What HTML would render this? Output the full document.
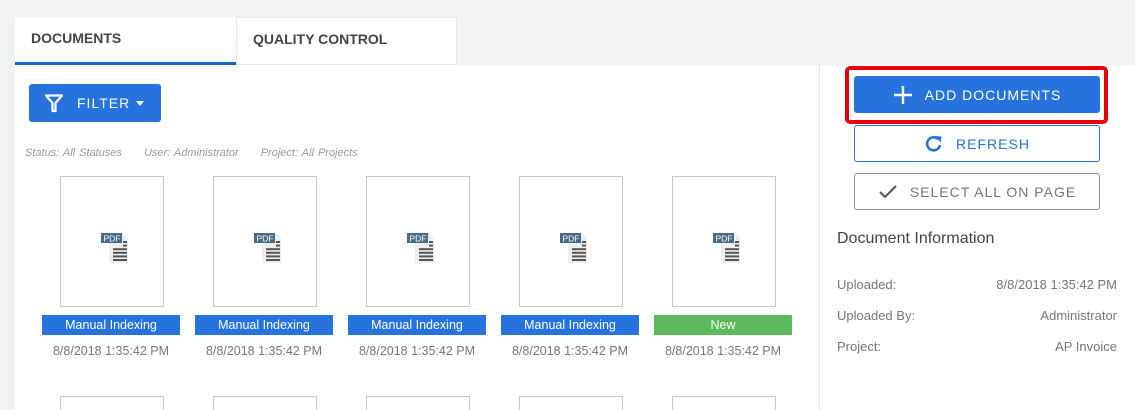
<!DOCTYPE html>
<html style="overflow:hidden;height:410px"><head><style>
body{margin:0;width:1135px;height:410px;background:#f1f2f2;font-family:"Liberation Sans",sans-serif;position:relative;overflow:hidden}
.a{position:absolute}
.tab{position:absolute;top:17px;height:48px;background:#fff;font-size:14px;font-weight:bold;color:#444;box-sizing:border-box;padding:13px 0 0 16px}
.thumb{position:absolute;top:176px;width:104px;height:131px;border:1px solid #c8c8cc;box-sizing:border-box;background:#fff}
.thumb2{top:396px;height:14px;border-bottom:none}
.lab{position:absolute;top:315px;width:138px;height:20px;background:#2673dd;color:#fff;font-size:12.5px;text-align:center;line-height:20px}
.dt{position:absolute;top:344px;width:138px;text-align:center;color:#777;font-size:12.5px}
.btn{position:absolute;left:854px;width:246px;height:37px;box-sizing:border-box;border-radius:3px;font-size:14px;letter-spacing:1px;display:flex;align-items:center;justify-content:center}
.row{position:absolute;left:837px;width:280px;font-size:13px;color:#777}
.row span{float:right}
</style></head><body>
<div class="a" style="left:15px;top:65px;width:1120px;height:345px;background:#fff"></div>
<div class="a" style="left:819px;top:65px;width:1px;height:345px;background:#e6e6e6"></div>
<div class="tab" style="left:15px;width:221px;border-bottom:3px solid #1565d0">DOCUMENTS</div>
<div class="tab" style="left:236px;width:221px;border:1px solid #e6e6e6">QUALITY CONTROL</div>
<div class="a" style="left:29px;top:84px;width:132px;height:38px;background:#2673dd;border-radius:3px;color:#fff;font-size:14px;letter-spacing:1px">
<svg class="a" style="left:16px;top:10px" width="18" height="19" viewBox="0 0 18 19"><path d="M1 1.5H17L10.5 9V17H7.5V9Z" fill="none" stroke="#fff" stroke-width="2.2" stroke-linejoin="round"/></svg>
<span class="a" style="left:48px;top:11px">FILTER</span>
<span class="a" style="left:107px;top:17px;border:4px solid transparent;border-top:5px solid #fff"></span></div>
<div class="a" style="left:25px;top:147px;font-size:11px;font-style:italic;color:#999;word-spacing:1px">Status: All Statuses<span style="margin-left:22px">User: Administrator</span><span style="margin-left:22px">Project: All Projects</span></div>
<div id="g"></div>
<script>
var xs=[60,213,366,519,672],h='';
xs.forEach(function(x,i){
h+='<div class="thumb" style="left:'+x+'px"><svg class="a" style="left:40px;top:55px" width="32" height="32" viewBox="0 0 32 32"><path d="M8 1H22L27 6V31H8Z" fill="#eee"/><rect x="0" y="1" width="21" height="10" fill="#4a6a86"/><text x="2.5" y="9.5" font-size="8.5" fill="#fff" font-family="Liberation Sans">PDF</text>';
for(var k=0;k<6;k++)h+='<rect x="'+(k<2?22:12)+'" y="'+(9+k*3.6)+'" width="'+(k<2?4:14)+'" height="2" fill="#555"/>';
h+='</svg></div><div class="thumb thumb2" style="left:'+x+'px"></div>';
var c=x-18;
h+='<div class="lab" style="left:'+c+'px;'+(i==4?'background:#5cb85c':'')+'">'+(i==4?'New':'Manual Indexing')+'</div>';
h+='<div class="dt" style="left:'+c+'px">8/8/2018 1:35:42 PM</div>';
});
document.getElementById('g').innerHTML=h;
</script>
<div class="a" style="left:845px;top:66px;width:263px;height:58px;box-sizing:border-box;border:4px solid #e8000b;border-radius:5px"></div>
<div class="btn" style="top:76px;background:#2673dd;color:#fff"><svg width="20" height="20" style="margin-right:12px"><path d="M10 1V19M1 10H19" stroke="#fff" stroke-width="2.4"/></svg>ADD DOCUMENTS</div>
<div class="btn" style="top:125px;border:1px solid #2673dd;color:#2673dd"><svg width="20" height="20" style="margin-right:12px" viewBox="0 0 20 20"><path d="M16 11A6.5 6.5 0 1 1 14 5" fill="none" stroke="#2673dd" stroke-width="2.6"/><path d="M11 2L17.5 2.5L16.5 8.5Z" fill="#2673dd"/></svg>REFRESH</div>
<div class="btn" style="top:173px;border:1px solid #8a93a0;color:#777"><svg width="20" height="16" style="margin-right:12px"><path d="M2 8L7 13L18 2" fill="none" stroke="#555" stroke-width="2"/></svg>SELECT ALL ON PAGE</div>
<div class="a" style="left:837px;top:230px;font-size:16px;color:#444">Document Information</div>
<div class="row" style="top:277px">Uploaded:<span>8/8/2018 1:35:42 PM</span></div>
<div class="row" style="top:308px">Uploaded By:<span>Administrator</span></div>
<div class="row" style="top:339px">Project:<span>AP Invoice</span></div>
</body></html>
